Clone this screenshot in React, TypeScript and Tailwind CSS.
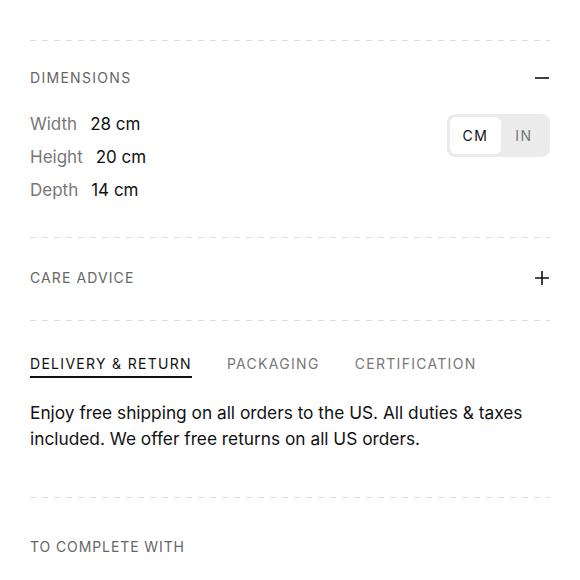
import { useState } from "react";

const font = { fontFamily: "Inter, 'Liberation Sans', sans-serif" };

function Dash() {
  return <div className="h-px w-full bg-[linear-gradient(to_right,#dcdcdc_50%,transparent_50%)] bg-[length:12px_1px]" />;
}

function Minus() {
  return (
    <svg width="16" height="16" viewBox="0 0 16 16" className="text-[#111]">
      <path d="M1 8h14" stroke="currentColor" strokeWidth="1.6" />
    </svg>
  );
}

function Plus() {
  return (
    <svg width="16" height="16" viewBox="0 0 16 16" className="text-[#111]">
      <path d="M1 8h14M8 1v14" stroke="currentColor" strokeWidth="1.6" />
    </svg>
  );
}

const dims = [
  { label: "Width", value: "28 cm" },
  { label: "Height", value: "20 cm" },
  { label: "Depth", value: "14 cm" },
];

export default function App() {
  const [unit, setUnit] = useState<"cm" | "in">("cm");
  const [tab, setTab] = useState(0);
  const tabs = ["DELIVERY & RETURN", "PACKAGING", "CERTIFICATION"];

  return (
    <div className="min-h-[580px] w-[580px] bg-white px-[30px] pt-[40px]" style={font}>
      <Dash />

      {/* dimensions */}
      <section className="pt-[28px] pb-[30px]">
        <div className="flex h-[18px] items-center justify-between">
          <h3 className="text-[14px] leading-[18px] tracking-[1.3px] text-[#666]">DIMENSIONS</h3>
          <Minus />
        </div>
        <div className="mt-[21px] flex items-start justify-between">
          <div>
            {dims.map((d) => (
              <div key={d.label} className="flex h-[33px] items-center text-[17px]">
                <span className="text-[#777]">{d.label}</span>
                <span className="ml-[13px] text-[#111]">{d.value}</span>
              </div>
            ))}
          </div>
          <div className="mt-[6px] flex rounded-[8px] bg-[#ebebeb] p-[3px]">
            <button
              onClick={() => setUnit("cm")}
              className={`h-[37px] w-[51px] rounded-[6px] text-[14px] tracking-[1.5px] ${unit === "cm" ? "bg-white text-[#111]" : "text-[#777]"}`}
            >
              CM
            </button>
            <button
              onClick={() => setUnit("in")}
              className={`h-[37px] w-[46px] rounded-[6px] text-[14px] tracking-[1.5px] ${unit === "in" ? "bg-white text-[#111]" : "text-[#777]"}`}
            >
              IN
            </button>
          </div>
        </div>
      </section>

      <Dash />

      {/* care advice */}
      <div className="flex h-[82px] items-center justify-between pb-[2px]">
        <h3 className="text-[14px] leading-[18px] tracking-[1.1px] text-[#666]">CARE ADVICE</h3>
        <Plus />
      </div>

      <Dash />

      {/* tabs */}
      <div className="flex gap-[35px] pt-[34px]">
        {tabs.map((t, i) => (
          <button
            key={t}
            onClick={() => setTab(i)}
            className={`border-b-2 pb-[3px] text-[14px] leading-[18px] tracking-[1.3px] ${tab === i ? "border-[#111] text-[#111]" : "border-transparent text-[#777]"}`}
          >
            {t}
          </button>
        ))}
      </div>
      <p className="mt-[22px] mb-[45px] text-[17.3px] leading-[26px] text-[#111]">
        Enjoy free shipping on all orders to the US. All duties &amp; taxes included. We offer free returns on all US orders.
      </p>

      <Dash />

      <h3 className="pt-[40px] text-[14px] leading-[18px] tracking-[0.9px] text-[#666]">TO COMPLETE WITH</h3>
    </div>
  );
}
